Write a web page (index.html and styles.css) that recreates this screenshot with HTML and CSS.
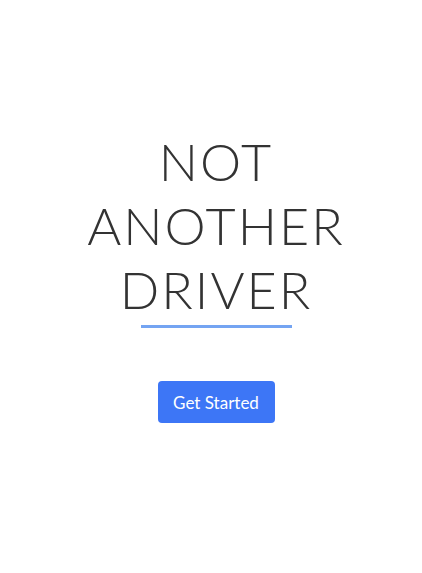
FILE: index.html
```html
<!DOCTYPE html>
<html>
  <head>
    <title>Not Another Driver</title>
    <meta charset="UTF-8" />
    <link rel="stylesheet" href="styles.css">
  </head>
  <body>
    <main class="hero">
      <h1 class="title">NOT<br />ANOTHER<br />DRIVER</h1>
      <div class="rule"></div>
      <button class="cta">Get Started</button>
    </main>
  </body>
</html>
```

FILE: styles.css
```css
body {
  font-family: Lato, "Open Sans", sans-serif;
  margin: 0;
  background: #fff;
}

.hero {
  display: flex;
  flex-direction: column;
  align-items: center;
  padding-top: 129px;
  padding-left: 10px;
}

.title {
  margin: 0;
  font-weight: 300;
  font-size: 52px;
  line-height: 64px;
  letter-spacing: 2px;
  text-align: center;
  color: #333;
}

.rule {
  width: 151px;
  height: 3px;
  background: #74a4f2;
  margin-top: 4px;
}

.cta {
  margin-top: 53px;
  width: 117px;
  height: 42px;
  border: none;
  border-radius: 4px;
  background: #3d76f6;
  color: #fff;
  font-family: inherit;
  font-size: 17px;
}
```
